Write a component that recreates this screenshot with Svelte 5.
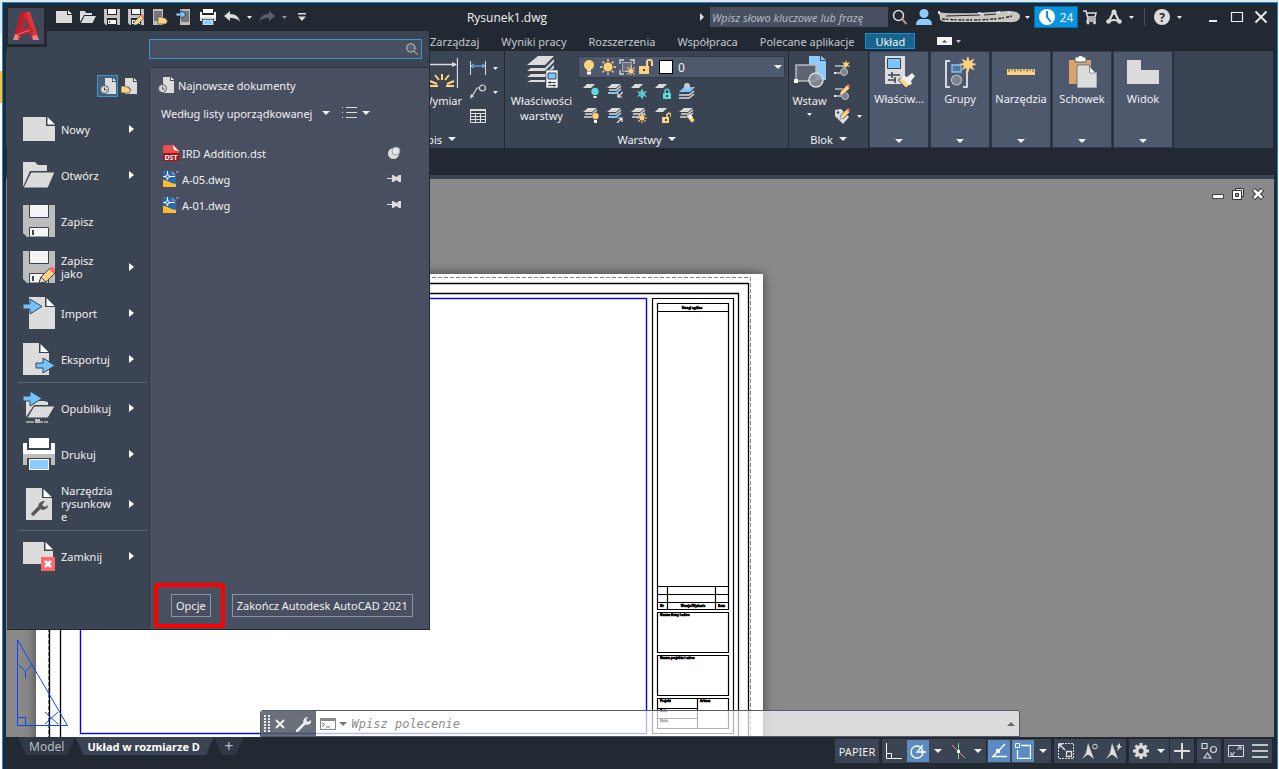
<script>
  const quickAccess = [
    { icon: 'new', label: 'Nowy' },
    { icon: 'open', label: 'Otwórz' },
    { icon: 'save', label: 'Zapisz' },
    { icon: 'saveas', label: 'Zapisz jako' },
    { icon: 'mobileOpen', label: 'Otwórz z urządzeń' },
    { icon: 'mobileSave', label: 'Zapisz w urządzeniach' },
    { icon: 'print', label: 'Drukuj' }
  ];

  const tabs = ['Zarządzaj', 'Wyniki pracy', 'Rozszerzenia', 'Współpraca', 'Polecane aplikacje', 'Układ'];
  let activeTab = $state('Układ');

  const layerTools = [
    'layerOff', 'layerIsolate', 'layerFreeze', 'layerLock', 'layerCurrent',
    'layerOn', 'layerUnisolate', 'layerThaw', 'layerUnlock', 'layerMatch'
  ];

  const collapsedPanels = [
    { icon: 'properties', label: 'Właściw...' },
    { icon: 'group', label: 'Grupy' },
    { icon: 'ruler', label: 'Narzędzia' },
    { icon: 'clipboard', label: 'Schowek' },
    { icon: 'view', label: 'Widok' }
  ];

  const menuGroups = [
    [
      { icon: 'bigNew', label: 'Nowy', sub: true },
      { icon: 'bigOpen', label: 'Otwórz', sub: true },
      { icon: 'bigSave', label: 'Zapisz', sub: false },
      { icon: 'bigSaveAs', label: 'Zapisz jako', sub: true },
      { icon: 'import', label: 'Import', sub: true },
      { icon: 'export', label: 'Eksportuj', sub: true }
    ],
    [
      { icon: 'publish', label: 'Opublikuj', sub: true },
      { icon: 'bigPrint', label: 'Drukuj', sub: true },
      { icon: 'utilities', label: 'Narzędzia rysunkowe', sub: true, tall: true }
    ],
    [{ icon: 'close', label: 'Zamknij', sub: true }]
  ];

  const files = [
    { name: 'IRD Addition.dst', type: 'dst', pinned: true },
    { name: 'A-05.dwg', type: 'dwg', pinned: false },
    { name: 'A-01.dwg', type: 'dwg', pinned: false }
  ];

  let menuQuery = $state('');
  let helpQuery = $state('');
  let command = $state('');
</script>

{#snippet arrow()}
  <svg class="arrow" width="8" height="4" viewBox="0 0 8 4"><path d="M0 0h8L4 4z" fill="currentColor" /></svg>
{/snippet}

{#snippet smallArrow()}
  <svg class="arrow" width="5" height="3" viewBox="0 0 5 3"><path d="M0 0h5L2.5 3z" fill="currentColor" /></svg>
{/snippet}

{#snippet pencil()}
  <path d="M6 16l1-4 6-6 3 3-6 6z" fill="#ffd27d" stroke="#3b4453" stroke-width=".7" />
  <path d="M6 16l1-3.500 2.500 2.500z" fill="#ddd" />
  <path d="M12.500 6.500L14 5l2 2-1.500 1.700z" fill="#f66" />
{/snippet}

{#snippet sheets()}
  <path d="M5 1h9l-5 4H0z" fill="#dcdcdc" />
  <path d="M2 7h7l5-4M1 10h8l5-4" fill="none" stroke="#dcdcdc" stroke-width="1.500" />
{/snippet}

{#snippet sun(x, y)}
  <g transform="translate({x} {y})">
    <path d="M0-5v10M-5 0h10M-3.500-3.500l7 7M3.500-3.500l-7 7" stroke="#ffd27d" stroke-width="1.100" stroke-dasharray="2 6 2" />
    <circle r="2.500" fill="#ffd27d" />
  </g>
{/snippet}

{#snippet icon16(name)}
  <svg width="16" height="16" viewBox="0 0 16 16">
    {#if name === 'new'}
      <path d="M0 2h11v4h5v8H0z" fill="#dcdcdc" /><path d="M12 1l4 4h-4z" fill="#fff" />
    {:else if name === 'open'}
      <path d="M0 13V2h5l1 2h6v2H4z" fill="#dcdcdc" /><path d="M4.500 7H16l-3.500 7H1z" fill="#dcdcdc" />
    {:else if name === 'save' || name === 'saveas'}
      <path d="M0 0h16v16H2l-2-2z" fill="#c4c4c4" />
      <path d="M3 0h10v6H3zM3 9h10v7H3z" fill="#222933" />
      <path d="M4 0h8v5H4zM4 11h8v4H4z" fill="#f5f5f5" />
      <path d="M5 12h1v2H5z" fill="#3b4453" />
      {#if name === 'saveas'}{@render pencil()}{/if}
    {:else if name === 'mobileOpen'}
      <path d="M1 0h10v16H1z" fill="#bdbdbd" /><path d="M2 2h8v10H2z" fill="#777" />
      <path d="M6 15V8h4l1 1h3v2h2l-2 4z" fill="#ffd27d" stroke="#3b4453" stroke-width=".6" />
    {:else if name === 'mobileSave'}
      <path d="M4 0h10v16H4z" fill="#bdbdbd" /><path d="M5 2h8v11H5z" fill="#777" />
      <path d="M0 4h5V1l5 4.500L5 10V7H0z" fill="#7cc6ff" stroke="#222933" stroke-width=".7" />
    {:else if name === 'print'}
      <path d="M3 0h10v4H3zM0 3h2v3h12V3h2v5H0z" fill="#fff" />
      <path d="M0 8h16v4h-2v-2H2v2H0z" fill="#dcdcdc" /><path d="M3 11h10v5H3z" fill="#8dcaff" stroke="#fff" stroke-width=".6" />
    {:else if name === 'undo' || name === 'redo'}
      <path transform={name === 'redo' ? 'translate(16 0) scale(-1 1)' : ''} d="M0 7l6-5v3c6 0 9 3 10 8-2-3-5-4-10-4v3z" fill={name === 'redo' ? '#58606c' : '#dcdcdc'} />
    {:else if name === 'recent'}
      <path d="M5 0h7v4h4v12H5z" fill="#dcdcdc" /><path d="M13 0l3 3h-3z" fill="#fff" />
      <circle cx="4.500" cy="11.500" r="4" fill="#dcdcdc" stroke="#4b5466" /><circle cx="4.500" cy="11.500" r="3" fill="#dcdcdc" stroke="#c0c0c0" /><path d="M4.500 9.500v2.500h2" fill="none" stroke="#444" />
    {:else if name === 'openDocs'}
      <path d="M4 0h8v4h4v12H4z" fill="#dcdcdc" /><path d="M13 0l3 3h-3z" fill="#fff" />
      <path d="M0 15V8h4l1 1h3v2h2l-2 4z" fill="#ffd27d" stroke="#3b4453" stroke-width=".7" />
    {:else if name === 'search'}
      <circle cx="6.500" cy="6.500" r="5" fill="none" stroke="#dcdcdc" stroke-width="1.500" /><path d="M10 10l4.500 5" stroke="#b9987a" stroke-width="2" />
    {:else if name === 'user'}
      <circle cx="8" cy="4.500" r="4.500" fill="#8dcaff" /><path d="M0 16c0-5 3-6 5-6h6c3 0 5 2 5 6z" fill="#8dcaff" />
    {:else if name === 'clock'}
      <circle cx="8" cy="8" r="8" fill="#fff" /><path d="M8 2v6l4 5" fill="none" stroke="#0a93d9" stroke-width="2" />
    {:else if name === 'cart'}
      <path d="M1 2h3l2 8h8M5 4h9l-1 4H6M6 10l-1 2h9" fill="none" stroke="#dcdcdc" stroke-width="1.500" /><circle cx="6" cy="14" r="1.400" fill="#dcdcdc" /><circle cx="12.500" cy="14" r="1.400" fill="#dcdcdc" />
    {:else if name === 'share'}
      <path d="M8 2L3 12M8 2l5 10M2 13q6-4 12 0" fill="none" stroke="#dcdcdc" stroke-width="2.200" /><circle cx="8" cy="3" r="2.500" fill="#dcdcdc" /><circle cx="2.500" cy="12.500" r="2.300" fill="#dcdcdc" /><circle cx="13.500" cy="12.500" r="2.300" fill="#dcdcdc" />
    {:else if name === 'bulb'}
      <circle cx="8" cy="6" r="5" fill="#ffd27d" /><path d="M6 10h4v2H6z" fill="#ffd27d" /><path d="M6 12.500h4v3H6z" fill="#fff" />
    {:else if name === 'sun'}
      <path d="M8 0v16M0 8h16M2.500 2.500l11 11M13.500 2.500l-11 11" stroke="#ffd27d" stroke-width="1.400" /><circle cx="8" cy="8" r="5" fill="#ffd27d" stroke="#4e596d" />
    {:else if name === 'viewport'}
      <path d="M1 5V1h4M11 1h4v4M1 11v4h4" fill="none" stroke="#dcdcdc" stroke-width="1.300" /><path d="M3.500 3.500h9v9h-9z" fill="#697181" stroke="#aaa" />{@render sun(12, 12)}
    {:else if name === 'unlock'}
      <path d="M1 7h10v8H1z" fill="#ffd27d" /><path d="M9 7V3c0-3 5-3 5 0v4" fill="none" stroke="#ffd27d" stroke-width="2" /><path d="M5 10h2v2H5z" fill="#3b4453" />
    {:else if name === 'layerOff'}
      <path d="M4 1h8L8 5H0z" fill="#dcdcdc" /><circle cx="12" cy="8.500" r="3.700" fill="#5cd6d6" /><path d="M10.500 13h3v2h-3z" fill="#fff" />
    {:else if name === 'layerIsolate' || name === 'layerUnisolate'}
      {@render sheets()}<path d="M1 10h8l5-4" fill="none" stroke="#7cc6ff" stroke-width="1.500" />
      <path d={name === 'layerIsolate' ? 'M16 9l-5 5m0-4v4h4' : 'M10 16l5-5m-4 0h4v4'} fill="none" stroke="#eee" stroke-width="1.200" />
    {:else if name === 'layerFreeze'}
      <path d="M4 1h8L8 5H0z" fill="#dcdcdc" /><path d="M11 6v10M6.500 8.500l9 5M15.500 8.500l-9 5" stroke="#5cd6d6" stroke-width="1.400" /><circle cx="11" cy="11" r="2.700" fill="none" stroke="#5cd6d6" />
    {:else if name === 'layerLock'}
      <path d="M4 1h8L8 5H0z" fill="#dcdcdc" /><path d="M8 10h8v6H8z" fill="#5cd6d6" /><path d="M10 10V8c0-2.500 4-2.500 4 0v2" fill="none" stroke="#5cd6d6" stroke-width="1.500" /><path d="M11 12h2v2h-2z" fill="#3b4453" />
    {:else if name === 'layerCurrent'}
      <path d="M5 4h11l-5 5H0z" fill="#7cc6ff" /><path d="M0 12h10l5-4M0 15h10l5-4" fill="none" stroke="#dcdcdc" stroke-width="1.500" /><circle cx="8" cy="3" r="3" fill="#c9c9cf" />
    {:else if name === 'layerOn'}
      {@render sheets()}<circle cx="12.500" cy="9" r="3.500" fill="#ffd27d" stroke="#3b4453" stroke-width=".5" /><path d="M11 13h3v3h-3z" fill="#fff" />
    {:else if name === 'layerThaw'}
      {@render sheets()}{@render sun(11, 11)}
    {:else if name === 'layerUnlock'}
      <path d="M4 1h8L8 5H0z" fill="#dcdcdc" /><path d="M7 10h7v6H7z" fill="#ffd27d" /><path d="M12 10V8c0-2.500 4-2.500 4 0v2" fill="none" stroke="#ffd27d" stroke-width="1.500" /><path d="M10 12h2v2h-2z" fill="#3b4453" />
    {:else if name === 'layerMatch'}
      {@render sheets()}<path d="M7 9l3-2 6 6-3 3z" fill="#ffd27d" stroke="#3b4453" stroke-width=".5" /><path d="M9 9l2-2 3 3-2 2z" fill="#fff" />
    {:else if name === 'blockCreate'}
      <path d="M1 6h9v7H2" fill="none" stroke="#c0c0c0" stroke-width="1.300" /><path d="M0 12h2v2H0z" fill="#eee" /><circle cx="10" cy="12" r="3.500" fill="#7b8290" stroke="#c0c0c0" />
      <path d="M12 0l1 3 3-1-2 2.500 2 2.500-3-1-1 3-1-3-3 1 2-2.500L8 2l3 1z" fill="#ffd27d" />
    {:else if name === 'blockEdit'}
      <path d="M1 5h9v7H2" fill="none" stroke="#c0c0c0" stroke-width="1.300" /><path d="M0 11h2v2H0z" fill="#eee" /><circle cx="11" cy="12" r="3.500" fill="#7b8290" stroke="#c0c0c0" /><g transform="translate(0 -5)">{@render pencil()}</g>
    {:else if name === 'attribute'}
      <path d="M1 2l6-1 8 8-6 7-8-8z" fill="#dcdcdc" /><circle cx="4" cy="4.500" r="1.200" fill="#3b4453" /><g transform="translate(0 -5)">{@render pencil()}</g>
    {:else if name === 'linear'}
      <path d="M.5 1v14M15.500 1v14" stroke="#dcdcdc" /><path d="M1 6h14M4 4L1 6l3 2M12 4l3 2-3 2" fill="none" stroke="#7cc6ff" />
    {:else if name === 'leader'}
      <path d="M9.500 4H7L1.500 13" fill="none" stroke="#dcdcdc" stroke-width="1.200" /><path d="M0 15l1-5 3 2z" fill="#dcdcdc" /><circle cx="12.500" cy="4" r="3" fill="none" stroke="#dcdcdc" stroke-width="1.200" />
    {:else if name === 'table'}
      <path d="M.5 1.500h15v13H.5zM.5 5.500h15M.5 8.500h15M.5 11.500h15M5.500 5v9M10.500 5v9" fill="none" stroke="#dcdcdc" /><path d="M0 1h16v2H0z" fill="#dcdcdc" />
    {:else if name === 'dst'}
      <path d="M0 0h11l5 5v11H0z" fill="#c4161c" /><path d="M2 0h9v5h5v4H0V1z" fill="#e85050" /><path d="M10 0l6 6-5-1z" fill="#fff" /><path d="M0 8h16v8H0z" fill="#a90f16" />
      <text x="8" y="14.500" text-anchor="middle" class="badge">DST</text>
    {:else if name === 'dwg'}
      <path d="M0 0h9l4 4v12H0z" fill="#2b68ae" /><path d="M9 0l4 4H9zM13 0h3v1l-3 1z" fill="#7190b5" /><path d="M0 9c5 0 6 3 13 4v3H0z" fill="#fdbb2d" /><path d="M4.500 0v9M0 5.500h12" stroke="#fff" /><path d="M3 4h3v3H3z" fill="#2b68ae" stroke="#fff" stroke-width=".8" />
    {:else if name === 'pinned'}
      <circle cx="7.500" cy="8.500" r="5.500" fill="#dcdcdc" /><circle cx="10" cy="6" r="4" fill="#e4e4e4" stroke="#8c8f98" stroke-width=".8" />
    {:else if name === 'pin'}
      <path d="M1 7.500h5M6.500 4v7" stroke="#dcdcdc" stroke-width="1.200" /><path d="M7 4l3.500 2L13 4h2v7h-2l-2.500-2L7 11z" fill="#dcdcdc" />
    {:else if name === 'list'}
      <path d="M5 2.500h11M5 7.500h11M5 12.500h11" stroke="#dcdcdc" /><path d="M1 2.500h1M1 7.500h1M1 12.500h1" stroke="#dcdcdc" stroke-width="1.200" />
    {:else if name === 'wrench'}
      <path d="M1 15L9 7" stroke="#eee" stroke-width="2.500" stroke-linecap="round" /><path d="M8 8C6 5 8 1 12 1l-2 3 2 2 3-2c1 4-3 6-7 4z" fill="#eee" />
    {:else if name === 'ortho'}
      <path d="M.5 0v15.500H16M.5 10.500h5v5" fill="none" stroke="#fff" />
    {:else if name === 'polar'}
      <circle cx="7" cy="9" r="6" fill="none" stroke="#fff" stroke-width="1.300" /><path d="M16 9H7l6-7" fill="none" stroke="#fff" stroke-width="1.300" /><path d="M12 6v5" stroke="#fff" />
    {:else if name === 'iso'}
      <path d="M8.500 0v16" stroke="#62e28a" /><path d="M2 2l13 13" stroke="#e88" /><path d="M7 7h3v3H7z" fill="#fff" />
    {:else if name === 'otrack'}
      <path d="M14 1L2 13.500h14" fill="none" stroke="#fff" stroke-width="1.500" /><path d="M5 6h4v4H5z" fill="#fff" />
    {:else if name === 'osnap'}
      <path d="M6 2.500h9.500v13h-13V7" fill="none" stroke="#fff" stroke-width="1.300" /><path d="M.5.5h4v4h-4z" fill="none" stroke="#fff" />
    {:else if name === 'select'}
      <path d="M1 .5h14.500v15H.5V.5" fill="none" stroke="#dcdcdc" stroke-dasharray="2 1" /><path d="M8.500 8.500h5v5h-5z" fill="#3b4453" stroke="#dcdcdc" stroke-width="1.300" /><path d="M1 1l6 6M1 5V1h4" fill="none" stroke="#dcdcdc" stroke-width="1.500" />
    {:else if name === 'annoVis' || name === 'annoAuto'}
      <path d="M6 0l6 16-5-4-2 0-5 4 4-6z" fill="#dcdcdc" />
      {#if name === 'annoVis'}<circle cx="13" cy="3.500" r="2.300" fill="none" stroke="#dcdcdc" />{:else}<path d="M14 0l-4 4h2l-1 4 5-5h-2z" fill="#dcdcdc" />{/if}
    {:else if name === 'gear'}
      <path d="M8 0v16M0 8h16M2.500 2.500l11 11M13.500 2.500l-11 11" stroke="#dcdcdc" stroke-width="3" /><circle cx="8" cy="8" r="4.500" fill="none" stroke="#dcdcdc" stroke-width="3" /><circle cx="8" cy="8" r="2.500" fill="#3b4453" />
    {:else if name === 'plus'}
      <path d="M8 0v16M0 8h16" stroke="#dcdcdc" stroke-width="2" />
    {:else if name === 'shapes'}
      <path d="M1 .5h5v5H1zM3 15l3.500-5 3.500 5z" fill="none" stroke="#dcdcdc" stroke-width="1.200" /><circle cx="12.500" cy="6.500" r="3" fill="none" stroke="#dcdcdc" stroke-width="1.200" />
    {:else if name === 'fullscreen'}
      <path d="M.5 2.500h15v11H.5z" fill="none" stroke="#dcdcdc" /><path d="M9 7l4-3M10 4h3v3M7 9l-4 3M3 9v3h3" fill="none" stroke="#dcdcdc" />
    {:else if name === 'burger'}
      <path d="M0 2h16M0 8h16M0 14h16" stroke="#eee" stroke-width="1.500" />
    {:else if name === 'minimize'}
      <path d="M4 12h8" stroke="#eee" stroke-width="2" />
    {:else if name === 'maximize'}
      <path d="M2.500 3.500h11v9h-11z" fill="none" stroke="#eee" stroke-width="1.200" />
    {:else if name === 'x'}
      <path d="M2.500 2.500l11 11M13.500 2.500l-11 11" stroke="#eee" stroke-width="1.800" />
    {/if}
  </svg>
{/snippet}

{#snippet blueArrow(x, y)}
  <path transform="translate({x} {y})" d="M0 5h7V0l12 7.500L7 15v-5H0z" fill="#73c2fb" stroke="#3b4453" />
{/snippet}

{#snippet icon32(name)}
  <svg width="32" height="32" viewBox="0 0 32 32">
    {#if name === 'bigNew'}
      <path d="M0 4h23v9h9v15H0z" fill="#dcdcdc" /><path d="M24.500 4l7.500 7.500h-7.500z" fill="#fff" />
    {:else if name === 'bigOpen'}
      <path d="M0 28V3h12l3 3h9v6H7L0 28" fill="#dcdcdc" /><path d="M8 13h24l-7 16H0z" fill="#dcdcdc" stroke="#3b4453" />
    {:else if name === 'bigSave' || name === 'bigSaveAs'}
      <path d="M0 0h32v32H4l-4-4z" fill="#bdbdbd" /><path d="M6.500-1h19v13.500h-19zM6.500 22.500h19V32h-19z" fill="#f5f5f5" stroke="#3b4453" /><path d="M9 25h2v5H9z" fill="#3b4453" />
      {#if name === 'bigSaveAs'}
        <path d="M16 32l2-6 9-9 5 5-9 9z" fill="#ffd27d" stroke="#3b4453" /><path d="M16 32l2-6 5 5z" fill="#ddd" stroke="#3b4453" /><path d="M26 18c2-4 7-1 6 3l-2 1z" fill="#f66" />
      {/if}
    {:else if name === 'import'}
      <path d="M6 0h16v10h10v22H6z" fill="#dcdcdc" /><path d="M23.500 1l8 8h-8z" fill="#fff" />{@render blueArrow(0, 2)}
    {:else if name === 'export'}
      <path d="M0 0h16v10h10v22H0z" fill="#dcdcdc" /><path d="M17.500 1l8 8h-8z" fill="#fff" />{@render blueArrow(13, 15)}
    {:else if name === 'publish'}
      <path d="M3 25V9h18l4 1v3H11z" fill="#dcdcdc" /><path d="M11 14h21l-7 12H4z" fill="#dcdcdc" stroke="#3b4453" /><path d="M3 30h22" stroke="#bbb" stroke-width="1.500" stroke-dasharray="8 1" /><path d="M12 27h5v4h-5z" fill="#bbb" />
      {@render blueArrow(0, -1)}
    {:else if name === 'bigPrint'}
      <path d="M6 0h20v10H6zM0 5h4v7h24V5h4v11H0z" fill="#fff" /><path d="M0 16h32v11h-4v-7H4v7H0z" fill="#bdbdbd" /><path d="M6.500 21.500h19v10h-19z" fill="#8dcaff" stroke="#fff" />
    {:else if name === 'utilities'}
      <path d="M3 0h16v10h10v22H3z" fill="#dcdcdc" /><path d="M20.500 1l8 8h-8z" fill="#fff" /><path d="M9 27l9-9" stroke="#595959" stroke-width="3.500" /><path d="M16 20c-2-4 1-7 6-7l-3 4 3 2 3-2c0 4-5 7-9 3z" fill="#595959" />
    {:else if name === 'close'}
      <path d="M0 2h21v9h9v13H0z" fill="#dcdcdc" /><path d="M22.500 2l7.500 7.500h-7.500z" fill="#fff" /><path d="M18 17h14v14H18z" fill="#f66" /><path d="M22 21l6 6M28 21l-6 6" stroke="#fff" stroke-width="2.500" />
    {:else if name === 'layers'}
      <path d="M12 0h16l-9 9H1zM5 12h14l9-9v3l-9 9H1zM5 18h14l9-9v3l-9 9H1zM5 24h14v2H1z" fill="#dcdcdc" />
      <path d="M20 14h12v18H20z" fill="#f5f5f5" stroke="#3b4453" stroke-width=".6" /><path d="M22 17h8v6h-8z" fill="#7cc6ff" stroke="#3b4453" /><path d="M22 26.500h8M22 29.500h8M24 25v3M28 28v3" stroke="#3b4453" />
    {:else if name === 'insert'}
      <path d="M15 0h11v5h6v19H15z" fill="#8dcaff" /><path d="M27 0l5 4h-5z" fill="#8dcaff" /><path d="M2 9h20v16H2z" fill="#5d6473" stroke="#bbb" stroke-width="1.500" /><circle cx="22" cy="24" r="7" fill="#8f939b" fill-opacity=".8" stroke="#dcdcdc" stroke-width="1.500" /><path d="M0 23h4v4H0z" fill="#fff" />
    {:else if name === 'dimension'}
      <path d="M0 8.500h30M31.500 2v32" stroke="#dcdcdc" stroke-width="1.300" /><path d="M31 8.500l-5-2.500v5z" fill="#dcdcdc" /><path d="M16 18v6M9 19l4 5M23 19l-4 5M4 25l7 3M28 25l-7 3M4 30h8M28 30h-8" stroke="#ffd27d" stroke-width="2" />
    {:else if name === 'properties'}
      <path d="M2 0h20v28H2z" fill="#dcdcdc" /><path d="M4.500 2.500h13v10h-13z" fill="#7cc6ff" stroke="#3b4453" /><path d="M5 19h12M5 24h8M9 16v6M12 21v6" stroke="#3b4453" stroke-width="1.500" />
      <path d="M15 24l5-4 8 8-5 4z" fill="#ffd27d" stroke="#4e596d" /><path d="M20 19l4 2 5-4 3 3-4 5 1 3-3 1-8-7z" fill="#f0f0f0" />
    {:else if name === 'group'}
      <path d="M6 5H2v26h4M19 31h4V14" fill="none" stroke="#fff" stroke-width="1.500" /><path d="M8 9h9v7H8z" fill="#56779c" stroke="#7cc6ff" stroke-width="1.300" /><circle cx="12.500" cy="24" r="5" fill="#7b8290" stroke="#bbb" stroke-width="1.200" />
      <path d="M24 0l1.500 5 5-2.500L28 7l5 1-5 2 2.500 4.500-5-2.500L24 17l-2-5-4.500 2.500L20 10l-5-2 5-1-2.500-4.500L22 5z" fill="#ffd27d" />
    {:else if name === 'ruler'}
      <path d="M2 13h28v6H2z" fill="#ffd27d" /><path d="M4 13v3M7 13v2M10 13v3M13 13v2M16 13v3M19 13v2M22 13v3M25 13v2M28 13v3" stroke="#4e596d" />
    {:else if name === 'clipboard'}
      <path d="M3 4h22v24H3z" fill="#d9a46c" /><path d="M9 1h3c0-2 5-2 5 0h3v5H9z" fill="#fff" stroke="#4e596d" /><path d="M11 9h13v7h7v16H11z" fill="#dcdcdc" stroke="#4e596d" stroke-width=".7" /><path d="M23.500 10l6 7h-6z" fill="#fff" stroke="#4e596d" stroke-width=".6" />
    {:else if name === 'view'}
      <path d="M0 4h14v10h18v14H0z" fill="#dcdcdc" />
    {/if}
  </svg>
{/snippet}

<div class="page">
  <div class="window">
    <header class="titlebar">
      <nav class="quick" aria-label="Szybki dostęp">
        {#each quickAccess as item}
          <button class="cell" aria-label={item.label}>{@render icon16(item.icon)}</button>
        {/each}
        <button class="cell" aria-label="Cofnij">{@render icon16('undo')}</button>
        <button class="cell narrow" aria-label="Lista cofania">{@render smallArrow()}</button>
        <button class="cell" aria-label="Ponów">{@render icon16('redo')}</button>
        <button class="cell narrow dim" aria-label="Lista ponawiania">{@render smallArrow()}</button>
        <button class="cell" aria-label="Dostosuj">
          <svg width="8" height="8" viewBox="0 0 8 8"><path d="M0 0h8v1.500H0zM0 3.500h8L4 8z" fill="#dcdcdc" /></svg>
        </button>
      </nav>
      <h1>Rysunek1.dwg</h1>
      <svg class="caret" width="4" height="8" viewBox="0 0 4 8"><path d="M0 0l4 4-4 4z" fill="#dcdcdc" /></svg>
      <input class="help-search" type="text" bind:value={helpQuery} placeholder="Wpisz słowo kluczowe lub frazę" aria-label="Szukaj pomocy" />
      <button class="cell" aria-label="Szukaj">{@render icon16('search')}</button>
      <button class="cell" aria-label="Użytkownik">{@render icon16('user')}</button>
      <button class="account" aria-label="Konto">
        <svg width="84" height="14" viewBox="0 0 84 14">
          <path d="M1 2q4 2 39 1l30-2q12 0 12 5 0 7-12 6L8 12Q1 11 2 8z" fill="#c9c7be" />
          <path d="M1 1v3M40 3l5 1M58 3l4-1M70 2l3 1" stroke="#dde" stroke-width="2" />
          <path d="M8 6l34-1M46 5l12-1" fill="none" stroke="#222933" stroke-width="1.200" />
          <path d="M4 9q30 2 52 0 12-1 18-3" fill="none" stroke="#222933" stroke-width="1.500" stroke-dasharray="3 1 2 2" />
        </svg>
        {@render smallArrow()}
      </button>
      <button class="trial">{@render icon16('clock')}<span>24</span></button>
      <button class="cell" aria-label="Sklep">{@render icon16('cart')}</button>
      <button class="cell" aria-label="Aplikacje">{@render icon16('share')}</button>
      <button class="cell narrow" aria-label="Lista aplikacji">{@render smallArrow()}</button>
      <span class="divider"></span>
      <button class="help">?</button>
      <button class="cell narrow" aria-label="Menu pomocy">{@render smallArrow()}</button>
      <div class="window-buttons">
        <button class="cell" aria-label="Minimalizuj">{@render icon16('minimize')}</button>
        <button class="cell" aria-label="Maksymalizuj">{@render icon16('maximize')}</button>
        <button class="cell" aria-label="Zamknij okno">{@render icon16('x')}</button>
      </div>
    </header>

    <nav class="tabs" aria-label="Wstążka">
      {#each tabs as tab}
        <button class="tab" class:active={tab === activeTab} onclick={() => (activeTab = tab)}>{tab}</button>
      {/each}
      <button class="collapse" aria-label="Zwiń wstążkę">
        <svg width="15" height="8" viewBox="0 0 15 8"><path d="M0 0h15v8H0z" fill="#f5f5f5" /><path d="M5 5.500h5L7.500 3z" fill="#444" /></svg>
        {@render smallArrow()}
      </button>
    </nav>

    <section class="ribbon">
      <div class="panel notes">
        <div class="panel-body">
          <button class="big">{@render icon32('dimension')}<span>Wymiar</span></button>
          <div class="stack">
            <button class="tool" aria-label="Liniowy">{@render icon16('linear')}{@render smallArrow()}</button>
            <button class="tool" aria-label="Odnośnik">{@render icon16('leader')}{@render smallArrow()}</button>
            <button class="tool" aria-label="Tabela">{@render icon16('table')}</button>
          </div>
        </div>
        <button class="panel-title">Opis {@render arrow()}</button>
      </div>

      <div class="panel layers">
        <div class="panel-body">
          <button class="big">{@render icon32('layers')}<span>Właściwości<br />warstwy</span></button>
          <div class="layer-side">
            <div class="layer-select">
              {@render icon16('bulb')}
              {@render icon16('sun')}
              {@render icon16('viewport')}
              {@render icon16('unlock')}
              <span class="swatch"></span>
              <select aria-label="Warstwa"><option>0</option></select>
              {@render arrow()}
            </div>
            <div class="layer-tools">
              {#each layerTools as tool}
                <button class="cell" aria-label={tool}>{@render icon16(tool)}</button>
              {/each}
            </div>
          </div>
        </div>
        <button class="panel-title">Warstwy {@render arrow()}</button>
      </div>

      <div class="panel block">
        <div class="panel-body">
          <button class="big insert">{@render icon32('insert')}<span>Wstaw</span>{@render smallArrow()}</button>
          <div class="stack">
            <button class="tool" aria-label="Utwórz blok">{@render icon16('blockCreate')}</button>
            <button class="tool" aria-label="Edytuj blok">{@render icon16('blockEdit')}</button>
            <button class="tool" aria-label="Atrybuty">{@render icon16('attribute')}{@render smallArrow()}</button>
          </div>
        </div>
        <button class="panel-title">Blok {@render arrow()}</button>
      </div>

      <div class="collapsed-panels">
        {#each collapsedPanels as panel}
          <button class="collapsed">
            {@render icon32(panel.icon)}
            <span>{panel.label}</span>
            {@render arrow()}
          </button>
        {/each}
      </div>
    </section>

    <main class="workspace">
      <!-- arkusz, ramka i tabelka rysunkowa -->
      <svg class="drawing" width="100%" height="100%">
        <g transform="translate(-6 -179)">
          <rect class="paper" x="36" y="274" width="727" height="560" fill="#fff" />
          <path d="M48.500 800V277.500H750.500V800" fill="none" stroke="#888" stroke-dasharray="4 2" />
          <path d="M49.500 800V283.500H748.500V800M60.500 800V293.500H738.500V800" fill="none" stroke="#000" stroke-width="1.300" />
          <rect x="80.500" y="298.500" width="566" height="435" fill="none" stroke="#ccf" stroke-width="3" />
          <rect x="80.500" y="298.500" width="566" height="435" fill="none" stroke="#00f" />
          <g fill="none" stroke="#000" stroke-width="1.200">
            <path d="M652.500 298.500h81v435h-81z" />
            <path d="M657.500 303.500h71v306h-71zM657.500 311.500h71M657.500 586.500h71M657.500 594.500h71M657.500 602.500h71M667.500 586.500v23M715.500 586.500v23" />
            <path d="M657.500 612.500h71v40h-71zM657.500 655.500h71v40h-71zM657.500 698.500h71v30h-71zM657.500 708.500h40M657.500 718.500h40M697.500 698.500v30" />
          </g>
          <g class="stamp">
            <text x="692" y="309" text-anchor="middle">Uwagi ogólne</text>
            <text x="660" y="607">Nr</text>
            <text x="693" y="607" text-anchor="middle">Wersja/Wydanie</text>
            <text x="718" y="607">Data</text>
            <text x="660" y="616">Nazwa firmy i adres</text>
            <text x="660" y="659">Nazwa projektu i adres</text>
            <text x="660" y="702">Projekt</text>
            <text x="700" y="702">Arkusz</text>
            <text x="660" y="712">Data</text>
            <text x="660" y="722">Skala</text>
          </g>
          <path d="M17.500 640v85.500h50zM17.500 717.500h8v8M19 665l6.500 6.500 6.500-6.500M25.500 671v7M45 712l13 12M58 712l-13 12" fill="none" stroke="#0a47ff" />
        </g>
      </svg>

      <div class="doc-buttons">
        <button aria-label="Minimalizuj rysunek"><svg width="12" height="12" viewBox="0 0 12 12"><path d="M.5 6.500h11v4H.5z" fill="#fff" stroke="#444" /></svg></button>
        <button aria-label="Przywróć rysunek"><svg width="12" height="12" viewBox="0 0 12 12"><path d="M3.500.5h8v8h-8z" fill="#ddd" stroke="#333" /><path d="M.5 2.500h9v9h-9z" fill="#fff" stroke="#333" /><path d="M3.500 5.500h3v3h-3z" fill="#999" stroke="#333" /></svg></button>
        <button aria-label="Zamknij rysunek"><svg width="12" height="12" viewBox="0 0 12 12"><path d="M1.500 1.500l9 9M10.500 1.500l-9 9" stroke="#333" stroke-width="4.500" /><path d="M2 2l8 8M10 2l-8 8" stroke="#fff" stroke-width="2.500" /></svg></button>
      </div>

      <div class="command">
        <div class="command-grip">
          <svg width="6" height="18" viewBox="0 0 6 18"><path d="M1 0v18M5 0v18" stroke="#eee" stroke-width="2" stroke-dasharray="2 1" /></svg>
          <button aria-label="Zamknij wiersz poleceń"><svg width="10" height="10" viewBox="0 0 10 10"><path d="M1 1l8 8M9 1L1 9" stroke="#eee" stroke-width="2" /></svg></button>
          <button aria-label="Dostosuj wiersz poleceń">{@render icon16('wrench')}</button>
        </div>
        <label class="command-line">
          <svg width="16" height="12" viewBox="0 0 16 12"><path d="M.5.500h15v11H.500z" fill="#fff" stroke="#888" /><path d="M0 0h16v3H0z" fill="#888" /><path d="M2 4.500l2.500 2L2 8.500M6 9h4" fill="none" stroke="#777" /></svg>
          {@render arrow()}
          <input type="text" bind:value={command} placeholder="Wpisz polecenie" aria-label="Wiersz poleceń" />
          <svg width="8" height="4" viewBox="0 0 8 4"><path d="M0 4h8L4 0z" fill="#666" /></svg>
        </label>
      </div>
    </main>

    <footer class="status">
      <nav class="layouts" aria-label="Układy">
        <button class="layout">Model</button>
        <button class="layout current">Układ w rozmiarze D</button>
        <button class="layout add">+</button>
      </nav>
      <div class="status-tools">
        <button class="space">PAPIER</button>
        <div class="group">
          <button class="cell" aria-label="Orto">{@render icon16('ortho')}</button>
          <button class="cell on" aria-label="Biegun">{@render icon16('polar')}</button>
          <button class="cell mid" aria-label="Kąty">{@render arrow()}</button>
          <button class="cell" aria-label="Izometria">{@render icon16('iso')}</button>
          <button class="cell mid" aria-label="Płaszczyzny">{@render arrow()}</button>
        </div>
        <div class="group joined">
          <button class="cell on" aria-label="Śledzenie">{@render icon16('otrack')}</button>
          <button class="cell on" aria-label="Lokalizacja">{@render icon16('osnap')}</button>
          <button class="cell mid" aria-label="Tryby lokalizacji">{@render arrow()}</button>
        </div>
        <div class="group">
          <button class="cell" aria-label="Wybór">{@render icon16('select')}</button>
          <button class="cell" aria-label="Widoczność opisów">{@render icon16('annoVis')}</button>
          <button class="cell" aria-label="Autoskala">{@render icon16('annoAuto')}</button>
        </div>
        <div class="group">
          <button class="cell" aria-label="Obszar roboczy">{@render icon16('gear')}</button>
          <button class="cell mid" aria-label="Lista obszarów">{@render arrow()}</button>
        </div>
        <div class="group joined"><button class="cell" aria-label="Monitor opisów">{@render icon16('plus')}</button></div>
        <div class="group"><button class="cell" aria-label="Izoluj obiekty">{@render icon16('shapes')}</button></div>
        <div class="group">
          <button class="cell" aria-label="Pełny ekran">{@render icon16('fullscreen')}</button>
          <button class="cell" aria-label="Dostosowywanie">{@render icon16('burger')}</button>
        </div>
      </div>
    </footer>

    <!-- menu aplikacji -->
    <aside class="app-menu">
      <div class="menu-top">
        <label class="menu-search">
          <input type="text" bind:value={menuQuery} aria-label="Szukaj poleceń" />
          <svg width="12" height="12" viewBox="0 0 16 16"><circle cx="6.500" cy="6.500" r="5.500" fill="#596275" stroke="#b5bac3" stroke-width="1.500" /><path d="M10.500 10.500l5 5" stroke="#a08c7c" stroke-width="2" /></svg>
        </label>
      </div>
      <div class="menu-left">
        <div class="modes">
          <button class="mode selected" aria-label="Najnowsze dokumenty">{@render icon16('recent')}</button>
          <button class="mode" aria-label="Otwarte dokumenty">{@render icon16('openDocs')}</button>
        </div>
        {#each menuGroups as group}
          <ul>
            {#each group as item}
              <li>
                <button class="menu-item" class:tall={item.tall}>
                  {@render icon32(item.icon)}
                  <span>{item.label}</span>
                  {#if item.sub}
                    <svg class="submenu" width="5" height="8" viewBox="0 0 5 8"><path d="M0 0l5 4-5 4z" fill="#fff" /></svg>
                  {/if}
                </button>
              </li>
            {/each}
          </ul>
        {/each}
      </div>
      <div class="menu-right">
        <h2>{@render icon16('recent')}Najnowsze dokumenty</h2>
        <div class="sorting">
          <button>Według listy uporządkowanej {@render arrow()}</button>
          <button class="view-mode" aria-label="Widok listy">{@render icon16('list')}{@render arrow()}</button>
        </div>
        <ul class="files">
          {#each files as file}
            <li>
              {@render icon16(file.type)}
              <a href="#{file.name}">{file.name}</a>
              <button aria-label="Przypnij {file.name}">{@render icon16(file.pinned ? 'pinned' : 'pin')}</button>
            </li>
          {/each}
        </ul>
        <div class="menu-actions">
          <div class="highlight"><button>Opcje</button></div>
          <button>Zakończ Autodesk AutoCAD 2021</button>
        </div>
      </div>
    </aside>

    <button class="logo" aria-label="Menu aplikacji">
      <svg width="28" height="30" viewBox="0 0 28 30">
        <path d="M9 1h9l9 28h-7L14 9 8 29H1z" fill="#d22630" />
        <path d="M9 1h4L6 29H1z" fill="#b81f28" />
        <path d="M14 1h4l9 28h-4z" fill="#e0373e" />
        <path d="M3 22l16-7 3 6-17 4z" fill="#c3242c" />
        <path d="M9 17l4-11 5 9z" fill="#7d3b46" />
        <path d="M4 24l14-5" fill="none" stroke="#e07078" />
        <path d="M1 29l2-6 4 2-1 4zM21 29l-1-4 5-1 2 5z" fill="#dd8a8a" />
      </svg>
    </button>
  </div>
</div>

<style>
  :global(body) {
    background: #fff;
    font-family: 'Noto Sans', 'Open Sans', sans-serif;
    font-size: 11px;
    color: #f0f0f0;
  }

  .page {
    box-sizing: border-box;
    min-height: 100vh;
    padding: 2px 1px 0 2px;
    display: flex;
    background: linear-gradient(#e2e9ed 34px, #fff 34px, #fff 71px, #fdc02f 71px, #fdc02f 103px, #fff 103px) no-repeat 0 0 / 2px 100%,
      linear-gradient(#e2e9ed, #e2e9ed) no-repeat 0 0 / 100% 2px;
  }

  .window {
    position: relative;
    flex: 1;
    min-width: 0;
    display: flex;
    flex-direction: column;
    background: #222933;
    border: 1px solid #0a8fd8;
    border-bottom: 0;
  }

  button {
    display: flex;
    align-items: center;
    justify-content: center;
    flex: none;
    padding: 0;
    margin: 0;
    border: 0;
    background: none;
    color: inherit;
    font: inherit;
  }

  input,
  select {
    min-width: 0;
    padding: 0;
    border: 0;
    outline: 0;
    background: none;
    color: inherit;
    font: inherit;
  }

  svg {
    display: block;
    flex: none;
  }

  ul {
    list-style: none;
    margin: 0;
    padding: 0;
  }

  .cell {
    width: 24px;
    height: 24px;
  }

  .cell.narrow {
    width: 11px;
  }

  .cell.mid {
    width: 16px;
  }

  .dim {
    color: #9096a0;
  }

  /* title bar */
  .titlebar {
    display: flex;
    align-items: center;
    height: 28px;
    padding: 0 4px 0 49px;
    font-size: 12px;
  }

  .quick {
    display: flex;
  }

  h1 {
    flex: 1;
    margin: 0;
    text-align: center;
    font-family: 'Open Sans', sans-serif;
    font-size: 12px;
    font-weight: 400;
  }

  .caret {
    margin-right: 6px;
  }

  .help-search {
    width: 176px;
    height: 20px;
    padding-left: 2px;
    background: #474f61;
    font-size: 11px;
  }

  .help-search::placeholder {
    color: #b4b8bf;
    font-style: italic;
    opacity: 1;
  }

  .account {
    gap: 3px;
    padding: 0 4px 0 2px;
  }

  .trial {
    gap: 5px;
    width: 44px;
    height: 22px;
    background: #0a93d9;
    outline: 1px solid #0869ae;
    outline-offset: -1px;
  }

  .divider {
    width: 1px;
    height: 18px;
    margin: 0 9px 0 7px;
    background: #454d5a;
  }

  .help {
    width: 16px;
    height: 16px;
    border-radius: 8px;
    margin-right: 4px;
    background: #dcdcdc;
    color: #222933;
    font-size: 12px;
    font-weight: 700;
  }

  .window-buttons {
    display: flex;
    margin-left: 16px;
  }

  /* ribbon tabs */
  .tabs {
    display: flex;
    align-items: center;
    height: 20px;
    padding-left: 416px;
    color: #c4c7cc;
  }

  .tab {
    height: 16px;
    padding: 0 11px;
  }

  .tab.active {
    padding: 0 9px;
    border: 1px solid #0a8fd8;
    background: #17658f;
    color: #f5f5f5;
  }

  .collapse {
    gap: 4px;
    margin-left: 22px;
  }

  /* ribbon */
  .ribbon {
    display: flex;
    height: 97px;
    margin: 0 4px 27px 3px;
    background: #3b4453;
  }

  .panel {
    display: flex;
    flex-direction: column;
    flex: none;
    border-right: 1px solid #222933;
  }

  .panel-body {
    display: flex;
    flex: 1;
    padding-top: 5px;
  }

  .panel-title {
    gap: 6px;
    height: 18px;
  }

  .notes {
    width: 498px;
  }

  .notes .panel-body {
    justify-content: flex-end;
  }

  .notes .panel-title {
    align-self: flex-end;
    margin-right: 48px;
  }

  .big {
    flex-direction: column;
    justify-content: flex-start;
    gap: 5px;
    line-height: 15px;
  }

  .stack {
    display: flex;
    flex-direction: column;
    margin: 0 6px 0 8px;
  }

  .tool {
    justify-content: flex-start;
    gap: 7px;
    width: 28px;
    height: 24px;
  }

  .layers {
    width: 283px;
  }

  .layers .big {
    width: 73px;
  }

  .layer-side {
    flex: 1;
    margin-right: 3px;
  }

  .layer-select {
    display: flex;
    align-items: center;
    gap: 3px;
    height: 20px;
    padding: 0 2px;
    border: 1px solid #333b48;
    background: #4e596d;
  }

  .swatch {
    width: 12px;
    height: 12px;
    margin: 0 2px;
    border: 1px solid #000;
    background: #fff;
  }

  .layer-select select {
    flex: 1;
    appearance: none;
    font-size: 12px;
  }

  .layer-tools {
    display: grid;
    grid-template-columns: repeat(5, 24px);
    padding: 1px 0 0 1px;
  }

  .block {
    width: 79px;
  }

  .insert {
    width: 41px;
  }

  .block .stack {
    margin: 0 0 0 4px;
  }

  .collapsed-panels {
    display: flex;
    gap: 1px;
    padding-right: 1px;
    background: #222933;
  }

  .collapsed {
    flex-direction: column;
    justify-content: flex-start;
    gap: 3px;
    width: 60px;
    padding: 4px 0;
    border: 1px solid #333b48;
    background: #4e596d;
  }

  .collapsed > :global(.arrow) {
    margin-top: auto;
  }

  /* drawing area */
  .workspace {
    position: relative;
    flex: 1;
    min-height: 300px;
    margin: 0 3px;
    border-top: 4px solid #3b4453;
    background: #898989;
  }

  .drawing {
    position: absolute;
    inset: 0;
  }

  .paper {
    filter: drop-shadow(0 0 6px rgba(0, 0, 0, 0.5));
  }

  .stamp {
    font-size: 3px;
    font-weight: 700;
    stroke: #000;
    stroke-width: 0.5px;
  }

  .badge {
    font-size: 7px;
    font-weight: 700;
    fill: #fff;
  }

  .doc-buttons {
    position: absolute;
    top: 9px;
    right: 10px;
    display: flex;
    gap: 8px;
  }

  .command {
    position: absolute;
    bottom: 0;
    left: 20%;
    right: 20%;
    display: flex;
    height: 27px;
    box-sizing: border-box;
    border: 1px solid #555b66;
    border-radius: 3px 3px 0 0;
    overflow: hidden;
  }

  .command-grip {
    display: flex;
    align-items: center;
    gap: 5px;
    width: 55px;
    padding-left: 3px;
    box-sizing: border-box;
    background: rgba(80, 87, 99, 0.85);
  }

  .command-grip button + button {
    margin-left: 6px;
  }

  .command-line {
    display: flex;
    align-items: center;
    flex: 1;
    gap: 3px;
    padding: 0 4px;
    background: rgba(255, 255, 255, 0.7);
    color: #777;
  }

  .command-line input {
    flex: 1;
    padding-left: 2px;
    font-family: 'DejaVu Sans Mono', monospace;
    font-size: 12px;
  }

  .command-line input::placeholder {
    color: #8c8c8c;
    font-style: italic;
    opacity: 1;
  }

  /* status bar */
  .status {
    display: flex;
    justify-content: space-between;
    height: 32px;
    padding: 0 5px 0 15px;
  }

  .layouts {
    display: flex;
  }

  .layout {
    height: 18px;
    padding: 0 11px;
    background: #303845;
    color: #b9bdc4;
    font-size: 12px;
    clip-path: polygon(0 0, 100% 0, calc(100% - 8px) 100%, 8px 100%);
  }

  .layout.current {
    padding: 0 14px 0 12px;
    background: #3b4453;
    color: #fff;
    font-size: 11px;
    font-weight: 700;
  }

  .layout.add {
    width: 30px;
    padding: 0;
    font-size: 16px;
  }

  .status-tools {
    display: flex;
    gap: 3px;
    padding-top: 2px;
  }

  .space {
    width: 44px;
    height: 24px;
    background: #3b4453;
  }

  .group {
    display: flex;
    height: 24px;
    background: #3b4453;
  }

  .group.joined {
    margin-left: -2px;
  }

  .on {
    background: #5b8bc0;
    outline: 1px solid #3b4453;
    outline-offset: -1px;
  }

  /* application menu */
  .logo {
    position: absolute;
    top: 5px;
    left: 5px;
    width: 36px;
    height: 36px;
    background: #3f4858;
    box-shadow: 0 0 0 3px #222933;
  }

  .app-menu {
    position: absolute;
    top: 28px;
    left: 4px;
    display: grid;
    grid-template-columns: 142px 280px;
    grid-template-rows: 36px 1fr;
    background: #3b4453;
    border-right: 1px solid #222933;
    border-bottom: 1px solid #222933;
  }

  .menu-top {
    grid-column: 1 / 3;
    padding: 8px 7px 0 142px;
  }

  .menu-search {
    display: flex;
    align-items: center;
    height: 18px;
    padding-right: 3px;
    border: 1px solid #3a93c9;
    background: #474f61;
  }

  .menu-search input {
    flex: 1;
  }

  .menu-left {
    padding-bottom: 50px;
  }

  .modes {
    display: flex;
    justify-content: flex-end;
    padding: 8px 10px 9px 0;
  }

  .mode {
    box-sizing: border-box;
    width: 21px;
    height: 22px;
    border: 1px solid transparent;
  }

  .mode.selected {
    border-color: #3a93c9;
    background: #42617a;
  }

  .menu-left ul + ul {
    margin: 0 2px 0 11px;
    padding-top: 2px;
    border-top: 1px solid #5c6473;
  }

  .menu-left ul + ul .menu-item {
    padding-left: 5px;
  }

  .menu-item {
    justify-content: flex-start;
    height: 46px;
    gap: 6px;
    padding-left: 16px;
    line-height: 13px;
    text-align: left;
  }

  .menu-item.tall {
    height: 53px;
  }

  .menu-item span {
    width: 54px;
    overflow-wrap: anywhere;
  }

  .submenu {
    margin-left: 8px;
  }

  .menu-right {
    display: flex;
    flex-direction: column;
    border-top: 1px solid #2d3440;
    border-left: 1px solid #333b48;
    background: #474f61;
  }

  h2 {
    display: flex;
    align-items: center;
    gap: 4px;
    height: 20px;
    margin: 7px 0 0 8px;
    font-size: 11px;
    font-weight: 400;
  }

  .sorting {
    display: flex;
    gap: 11px;
    height: 20px;
    margin: 8px 0 0 11px;
  }

  .sorting button {
    gap: 10px;
  }

  .sorting .view-mode {
    gap: 5px;
  }

  .files {
    margin-top: 17px;
    padding: 0 27px 0 13px;
  }

  .files li {
    display: flex;
    align-items: center;
    gap: 3px;
    height: 26px;
  }

  .files a {
    flex: 1;
    color: inherit;
    text-decoration: none;
  }

  .menu-actions {
    display: flex;
    align-items: center;
    gap: 7px;
    margin: auto 0 1px 4px;
  }

  .menu-actions button {
    height: 23px;
    padding: 0 4px;
    border: 1px solid #8b94a5;
    box-sizing: border-box;
  }

  .highlight {
    padding: 7px 10px 7px 13px;
    border: 4px solid #f00;
    border-radius: 3px;
  }
</style>
